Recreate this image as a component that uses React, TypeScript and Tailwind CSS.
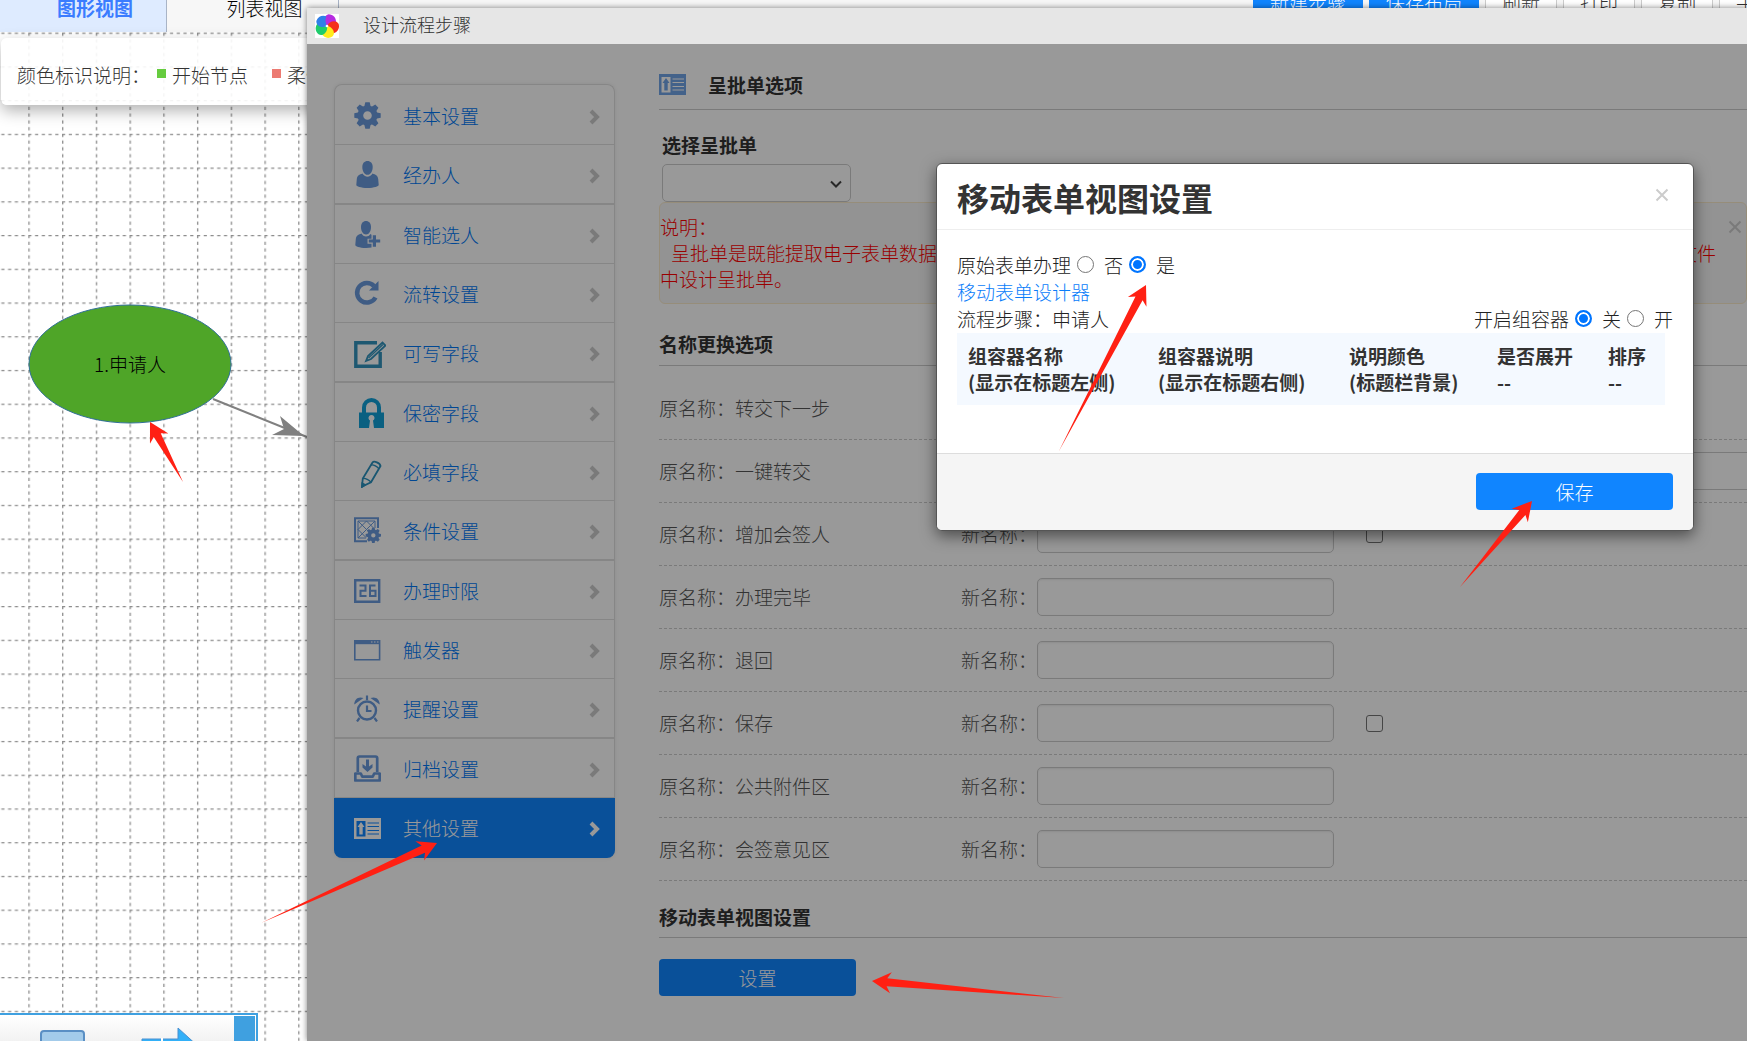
import type { ReactNode } from "react";

type IconProps = { className?: string };

const GEAR_TEETH = [0, 45, 90, 135, 180, 225, 270, 315];

function GearIcon({ className }: IconProps) {
    return (
        <svg viewBox="0 0 27 27" className={className} fill="currentColor">
            {GEAR_TEETH.map((a) => (
                <path key={a} d="M11.3 0.3h4.4l1.4 6h-7.2z" transform={`rotate(${a} 13.5 13.5)`} />
            ))}
            <path
                fillRule="evenodd"
                d="M13.5 3.5a10 10 0 1 0 0 20a10 10 0 0 0 0-20zm0 5.7a4.3 4.3 0 1 1 0 8.6a4.3 4.3 0 0 1 0-8.6z"
            />
        </svg>
    );
}

function UserIcon({ className }: IconProps) {
    return (
        <svg viewBox="0 0 27 27" className={className} fill="currentColor">
            <path d="M13.5 0c3 0 5.2 2.3 5.2 6c0 4.2-2.2 7.8-5.2 7.8S8.3 10.2 8.3 6C8.3 2.3 10.5 0 13.5 0z" />
            <path d="M8.5 12.5c-3 1-5.3 2-5.7 5.5L2.3 24c0 1.2 4.5 3 11.2 3s11.2-1.8 11.2-3l-.5-6c-.4-3.5-2.7-4.5-5.7-5.5c-1 2-3 3.2-5 3.2s-4-1.2-5-3.2z" />
        </svg>
    );
}

function UserPlusIcon({ className }: IconProps) {
    return (
        <svg viewBox="0 0 27 27" className={className} fill="currentColor">
            <path d="M12 0c3 0 5 2.3 5 6c0 4.2-2 7.5-5 7.5S7 10.2 7 6C7 2.3 9 0 12 0z" />
            <path d="M7.5 12.5c-3 1-5.3 2-5.7 5.5L1.3 24c0 1.2 4 3 10.7 3c2.2 0 4-.2 5.5-.5v-3.7h-4v-5h4v-4l-1-.8c-1 1.7-2.6 2.5-4.5 2.5s-3.5-1-4.5-3z" />
            <path d="M18.8 14.2h3.2v4.2h4.2v3.2H22v4.2h-3.2v-4.2h-4v-3.2h4z" />
        </svg>
    );
}

function RotateIcon({ className }: IconProps) {
    return (
        <svg viewBox="0 0 27 27" className={className}>
            <path d="M21.5 17.5a9.8 9.8 0 1 1-1.5-11.5" fill="none" stroke="currentColor" strokeWidth="4.5" />
            <path d="M24.5 1v9.5h-9.5z" fill="currentColor" />
        </svg>
    );
}

function WriteIcon({ className }: IconProps) {
    return (
        <svg viewBox="0 0 32 27" className={className} fill="none" stroke="currentColor">
            <path d="M23 1.8H1.8v23.4h24.4V11" strokeWidth="3.4" />
            <path d="M12 20l2-5L28.5 1.5l3 3L17 18z" strokeWidth="1.8" />
            <path d="M14.5 17L29 3.5" strokeWidth="1.2" />
        </svg>
    );
}

function LockIcon({ className }: IconProps) {
    return (
        <svg viewBox="0 0 27 30" className={className}>
            <path d="M6 15V9.5a7.5 7.5 0 0 1 15 0V15" fill="none" stroke="currentColor" strokeWidth="4" />
            <path
                fill="currentColor"
                fillRule="evenodd"
                d="M1 14.5h25V30H16l-1-7.5a3 3 0 1 0-3 0L11 30H1z"
            />
        </svg>
    );
}

function PencilIcon({ className }: IconProps) {
    return (
        <svg viewBox="0 0 27 28" className={className} fill="none" stroke="currentColor" strokeWidth="1.8">
            <path d="M4 26.5l.8-8L14.5 2.5c1.5-2 7.5.5 8 3.5L13 22.3z" />
            <path d="M4.8 18.5c2.5-.5 6.7 1.5 8.2 3.8M13 5c2.5-.5 6.5 1.5 8 4" strokeWidth="1.4" />
            <path d="M4 27l.3-3.5l2.7 1.4z" fill="currentColor" />
        </svg>
    );
}

function RuleIcon({ className }: IconProps) {
    return (
        <svg viewBox="0 0 27 27" className={className}>
            <g fill="none" stroke="currentColor">
                <path d="M24 11V1.3H1v23h12" strokeWidth="2" />
                <path d="M4 4h17v7M4 4v17h8M4 4l13 13M21 4L4 21M12.5 4L4 12.5l8 8M12.5 4l7 7" strokeWidth="1" />
            </g>
            <g transform="translate(11.5 10.5) scale(.58)" fill="currentColor">
                {GEAR_TEETH.map((a) => (
                    <path key={a} d="M11.3 0.3h4.4l1.4 6h-7.2z" transform={`rotate(${a} 13.5 13.5)`} />
                ))}
                <path
                    fillRule="evenodd"
                    d="M13.5 3.5a10 10 0 1 0 0 20a10 10 0 0 0 0-20zm0 6.2a3.8 3.8 0 1 1 0 7.6a3.8 3.8 0 0 1 0-7.6z"
                />
            </g>
        </svg>
    );
}

function CalendarIcon({ className }: IconProps) {
    return (
        <svg viewBox="0 0 27 27" className={className} fill="none" stroke="currentColor">
            <path d="M1.2 3.2h24v21.5h-24z" strokeWidth="2.4" />
            <path d="M5.5 8.5h6v5.2h-5v5.3h6M21.5 8.5h-5.5V19h5.5v-5.3h-5" strokeWidth="2" />
        </svg>
    );
}

function WindowIcon({ className }: IconProps) {
    return (
        <svg viewBox="0 0 27 27" className={className}>
            <path d="M.8 4.8h24.8v19H.8z" fill="none" stroke="currentColor" strokeWidth="1.6" />
            <path d="M.8 4.2h24.8v4H.8z" fill="currentColor" />
            <path d="M17 6h1.5M20 6h1.5M23 6h1.5" stroke="#fff" strokeWidth="1.2" />
        </svg>
    );
}

function AlarmIcon({ className }: IconProps) {
    return (
        <svg viewBox="0 0 27 27" className={className}>
            <circle cx="13" cy="15.5" r="9" fill="none" stroke="currentColor" strokeWidth="2.4" />
            <path d="M13 10.5v5.5h4.5M5.5 23l-2.5 3.5M20.5 23l2.5 3.5M13 .5v4.5" fill="none" stroke="currentColor" strokeWidth="2.2" />
            <path d="M.3 9.5C.3 4 4.5 1 9.5 3zM25.7 9.5C25.7 4 21.5 1 16.5 3z" fill="currentColor" />
        </svg>
    );
}

function ArchiveIcon({ className }: IconProps) {
    return (
        <svg viewBox="0 0 27 27" className={className}>
            <path
                d="M3.8 17V3.2c0-1 .7-1.7 1.7-1.7h16c1 0 1.7.7 1.7 1.7V17M1.3 18.5h5.5l1.5 3.2h10.4l1.5-3.2h5.5v7H1.3z"
                fill="none"
                stroke="currentColor"
                strokeWidth="2.7"
                strokeLinejoin="round"
            />
            <path d="M12 4.5h3v7l3.5-2.5v3.5L13.5 17l-5-4.5V9l3.5 2.5z" fill="currentColor" />
        </svg>
    );
}

function CardIcon({ className }: IconProps) {
    return (
        <svg viewBox="0 0 27 27" className={className}>
            <path
                fill="currentColor"
                fillRule="evenodd"
                d="M0 3h27v21H0zM2.5 6v15.5h9V6zM13.5 7.5v1h11.5v-1zM13.5 11v1h11.5v-1zM13.5 15v1h11.5v-1zM13.5 18.5v1h11.5v-1z"
            />
            <path d="M7 7l3.5 5h-1.8v7.5H5.3V12H3.5z" fill="currentColor" />
        </svg>
    );
}

function PinwheelIcon({ className }: IconProps) {
    const colors = ["#b62ce0", "#f5301c", "#ffec1c", "#1fcc6c", "#2f7fe8"];
    return (
        <svg viewBox="0 0 24 24" className={className}>
            <path d="M0 0h24v24H0z" fill="#fff" />
            {colors.map((c, i) => (
                <path key={c} d="M12 12C8 8.5 8.5 1.5 13.5.3c5 0 8 4 7.5 8.2C18 8 15 9 12 12z" fill={c} transform={`rotate(${i * 72} 12 12)`} />
            ))}
            <circle cx="12" cy="12" r="1.3" fill="#fff" />
        </svg>
    );
}

function ChevronIcon({ className }: IconProps) {
    return (
        <svg viewBox="0 0 12 16" className={className}>
            <path d="M2 2l6 6l-6 6" fill="none" stroke="currentColor" strokeWidth="4" />
        </svg>
    );
}

function CloseIcon({ className }: IconProps) {
    return (
        <svg viewBox="0 0 14 14" className={className}>
            <path d="M1.5 1.5l11 11M12.5 1.5l-11 11" stroke="currentColor" strokeWidth="2" />
        </svg>
    );
}

const menu = [
    { label: "基本设置", icon: GearIcon, size: "w-[27px] h-[27px]" },
    { label: "经办人", icon: UserIcon, size: "w-[27px] h-[27px]", thick: true },
    { label: "智能选人", icon: UserPlusIcon, size: "w-[27px] h-[27px]" },
    { label: "流转设置", icon: RotateIcon, size: "w-[27px] h-[27px]" },
    { label: "可写字段", icon: WriteIcon, size: "w-8 h-[27px] mt-1", color: "text-[#3393bd]", thick: true },
    { label: "保密字段", icon: LockIcon, size: "w-[27px] h-[30px] ml-1", color: "text-[#12a0d8]" },
    { label: "必填字段", icon: PencilIcon, size: "w-[27px] h-7 ml-1 mt-1", color: "text-[#2a90bd]" },
    { label: "条件设置", icon: RuleIcon, size: "w-[27px] h-[27px]", thick: true },
    { label: "办理时限", icon: CalendarIcon, size: "w-[27px] h-[27px]" },
    { label: "触发器", icon: WindowIcon, size: "w-[27px] h-[27px]" },
    { label: "提醒设置", icon: AlarmIcon, size: "w-[27px] h-[27px]", thick: true },
    { label: "归档设置", icon: ArchiveIcon, size: "w-[27px] h-[27px]" },
    { label: "其他设置", icon: CardIcon, size: "w-[27px] h-[27px]", active: true },
];

const renames = [
    { name: "转交下一步", check: true },
    { name: "一键转交", check: true, extra: true },
    { name: "增加会签人", check: true },
    { name: "办理完毕" },
    { name: "退回" },
    { name: "保存", check: true },
    { name: "公共附件区" },
    { name: "会签意见区" },
];

const columns = [
    { title: "组容器名称", note: "(显示在标题左侧)", width: "w-[190px]" },
    { title: "组容器说明", note: "(显示在标题右侧)", width: "w-[191px]" },
    { title: "说明颜色", note: "(标题栏背景)", width: "w-[148px]" },
    { title: "是否展开", note: "--", width: "w-[111px]" },
    { title: "排序", note: "--", width: "w-[68px]" },
];

// tail x/y, tip x/y
const arrows = [
    [183, 482, 150, 422],
    [261, 923, 437, 843],
    [1059, 451, 1146, 285],
    [1460, 587, 1532, 501],
    [1064, 998, 872, 981],
];

function Arrow({ points: [x1, y1, x2, y2] }: { points: number[] }) {
    const len = Math.hypot(x2 - x1, y2 - y1);
    const angle = (Math.atan2(y2 - y1, x2 - x1) * 180) / Math.PI;
    return (
        <polygon
            points={`0,0 ${len - 15},-4 ${len - 19},-10.5 ${len},0 ${len - 19},10.5 ${len - 15},4`}
            transform={`translate(${x1} ${y1}) rotate(${angle})`}
            fill="#ff2013"
        />
    );
}

function TopBar() {
    return (
        <div className="flex h-8 items-end justify-between overflow-hidden bg-[#f7f7f7]">
            <div className="flex h-12 shrink-0">
                <button className="w-[167px] border-r border-[#a9b4c6] bg-[#deebff] pl-6 font-bold text-[#3b7cff]">图形视图</button>
                <button className="w-[172px] border-r border-[#a9b4c6] pl-6 text-black">列表视图</button>
            </div>
            <div className="mb-3 flex shrink-0 gap-[6px]">
                <button className="h-9 w-[110px] bg-[#1085ff] text-white">新建步骤</button>
                <button className="h-9 w-[110px] bg-[#1085ff] text-white">保存布局</button>
                {["刷新", "打印", "复制"].map((label) => (
                    <button key={label} className="h-9 w-[72px] border border-[#ccc] bg-white text-[#333]">
                        {label}
                    </button>
                ))}
                <button className="h-9 w-7 overflow-hidden border border-r-0 border-[#ccc] bg-white pl-4 text-left whitespace-nowrap text-[#333]">
                    手动
                </button>
            </div>
        </div>
    );
}

function FlowCanvas() {
    return (
        <div className="relative flex-1 bg-white">
            <svg className="absolute inset-0 h-full w-full">
                <defs>
                    <pattern id="grid" width="33.73" height="33.73" patternUnits="userSpaceOnUse" x="28.3" y="101.8">
                        <path d="M.7 0V33.73M0 .7H33.73" stroke="#8c8c8c" strokeWidth="1.3" strokeDasharray="3.2 3.546" />
                    </pattern>
                </defs>
                <rect width="100%" height="100%" fill="url(#grid)" />
                <path d="M213 367l94 38" stroke="#808080" strokeWidth="2" />
                <path d="M304 404l-32-1l12-6l-4-13z" fill="#808080" />
                <ellipse cx="130" cy="332" rx="101" ry="59" fill="#4fa528" stroke="#2f6f96" />
            </svg>
            <div className="absolute top-[273px] left-[29px] flex h-[118px] w-[202px] items-center justify-center text-black">
                1.申请人
            </div>
            <div className="absolute top-[6px] left-px flex h-[67px] w-[420px] items-center rounded-md bg-white/90 pt-[6px] pl-4 whitespace-nowrap text-[#333] shadow-[0_6px_16px_rgba(0,0,0,0.3)]">
                <span className="mr-[7px]">颜色标识说明：</span>
                <span className="mr-[6px] mb-[2px] h-[9px] w-[9px] bg-[#66cc3f]" />
                <span className="mr-6">开始节点</span>
                <span className="mr-[6px] mb-[2px] h-[9px] w-[9px] bg-[#ec7a72]" />
                <span>柔性节点</span>
            </div>
            <div className="absolute bottom-0 left-0 flex h-7 w-[258px] overflow-hidden border-t-2 border-r-2 border-[#3fa0e0] bg-gradient-to-b from-white to-[#f2f2f2]">
                <svg className="h-[26px] flex-1" viewBox="0 0 234 26">
                    <rect x="41" y="16" width="43" height="30" rx="3" fill="#a3cbea" stroke="#5a8fc4" strokeWidth="2" />
                    <path d="M142 24H178V13l22 20h-58z" fill="#32b0f8" stroke="#4a90d0" />
                    <path d="M162 23v6" stroke="#fff" strokeWidth="2" />
                </svg>
                <div className="mt-px mr-px w-[21px] bg-[#3fa0e0]" />
            </div>
        </div>
    );
}

function SideMenu() {
    return (
        <nav className="mt-10 h-fit w-[281px] shrink-0 rounded-lg border border-b-0 border-[#e0e0e0] pt-px shadow-[0_0_4px_rgba(0,0,0,0.08)]">
            {menu.map(({ label, icon: Icon, size, color, thick, active }) => (
                <a
                    key={label}
                    href="#"
                    className={
                        active
                            ? "-mx-px flex h-[60px] items-center rounded-b-lg bg-[#1085ff] px-5 text-white"
                            : `box-content flex h-[57px] items-center px-[19px] pt-px text-[#0077f5] ${thick ? "border-b-2" : "border-b"} border-[#e0e0e0]`
                    }
                >
                    <span className={`flex w-[49px] items-center ${active ? "text-white" : color || "text-[#6999dc]"}`}>
                        <Icon className={`${size} shrink-0`} />
                    </span>
                    <span className="flex-1">{label}</span>
                    <ChevronIcon className={`mt-[2px] mr-[-6px] h-4 w-3 ${active ? "text-white" : "text-[#ccc]"}`} />
                </a>
            ))}
        </nav>
    );
}

function SectionTitle({ className, children }: { className: string; children: ReactNode }) {
    return <h3 className={`flex items-center border-b border-[#ccc] font-bold text-[#333] ${className}`}>{children}</h3>;
}

function Content() {
    return (
        <main className="ml-11 min-w-0 flex-1">
            <SectionTitle className="h-[66px] pt-4">
                <CardIcon className="mr-[22px] h-[27px] w-[27px] text-[#70a4e6]" />
                呈批单选项
            </SectionTitle>
            <label htmlFor="sheet" className="mt-[21px] mb-[5px] ml-[3px] block leading-7 font-bold text-[#333]">
                选择呈批单
            </label>
            <div className="relative ml-[3px] w-[189px]">
                <select id="sheet" className="block h-[38px] w-full appearance-none rounded-[5px] border border-[#ccc] bg-white" />
                <svg viewBox="0 0 14 9" className="pointer-events-none absolute top-4 right-2 h-[9px] w-[14px]">
                    <path d="M2 1.5l5 5l5-5" fill="none" stroke="#444" strokeWidth="2" />
                </svg>
            </div>
            <div className="relative rounded-md border border-[#faebcc] bg-[#f5f5f5] py-[11px] leading-[26px] whitespace-nowrap text-[#f00]">
                <p>说明：</p>
                <p className="pl-[11px]">
                    呈批单是既能提取电子表单数据又能提取办理意见的打印模板，流程办理过程中可以随时打印归档，请在系统中的呈批单文件
                </p>
                <p>中设计呈批单。</p>
                <button aria-label="关闭说明" className="absolute top-[17px] right-1 text-[#ccc]">
                    <CloseIcon className="h-[14px] w-[14px]" />
                </button>
            </div>
            <SectionTitle className="h-[62px] pt-[18px]">名称更换选项</SectionTitle>
            <div className="pt-[11px] text-[#555]">
                {renames.map(({ name, check, extra }, i) => (
                    <div key={name} className="flex h-[63px] items-center border-b border-dashed border-[#ccc]">
                        <span className="w-[302px] shrink-0">原名称：{name}</span>
                        <label htmlFor={`rename-${i}`} className="shrink-0">
                            新名称：
                        </label>
                        <input
                            id={`rename-${i}`}
                            type="text"
                            className="h-[38px] w-[297px] shrink-0 rounded-[5px] border border-[#ccc] bg-white shadow-[inset_0_1px_2px_rgba(0,0,0,0.08)]"
                        />
                        {check && (
                            <input
                                type="checkbox"
                                aria-label={name}
                                className="ml-8 h-[17px] w-[17px] shrink-0 appearance-none rounded-[3px] border border-[#767676] bg-white"
                            />
                        )}
                        {extra && (
                            <input
                                type="text"
                                aria-label="备注"
                                className="ml-4 h-[38px] min-w-0 flex-1 border-y border-[#ccc] bg-white"
                            />
                        )}
                    </div>
                ))}
            </div>
            <SectionTitle className="h-[57px] pt-4">移动表单视图设置</SectionTitle>
            <button className="mt-[21px] h-[37px] w-[197px] rounded-sm bg-[#1085ff] text-white">设置</button>
        </main>
    );
}

function Radio({ name, label, checked }: { name: string; label: string; checked?: boolean }) {
    return (
        <label className="flex items-center gap-[10px]">
            <input
                type="radio"
                name={name}
                defaultChecked={checked}
                className="h-[17px] w-[17px] appearance-none rounded-full border border-[#767676] bg-white checked:border-2 checked:border-[#0075ff] checked:bg-[#0075ff] checked:shadow-[inset_0_0_0_2px_#fff]"
            />
            {label}
        </label>
    );
}

function ViewModal() {
    return (
        <section
            role="dialog"
            className="absolute top-[155px] right-[53px] w-[758px] overflow-hidden rounded-md border border-[#555] bg-white text-[#333] shadow-[0_5px_15px_rgba(0,0,0,0.5)]"
        >
            <header className="flex h-[66px] items-center justify-between border-b border-[#eee] px-5 pt-px">
                <h2 className="text-[32px] leading-10 font-bold">移动表单视图设置</h2>
                <button aria-label="关闭" className="mr-1 mb-1 text-[#ccc]">
                    <CloseIcon className="h-[14px] w-[14px]" />
                </button>
            </header>
            <div className="px-5 pt-[21px] pb-12 leading-[27px] text-[#222]">
                <div className="flex items-center gap-[6px]">
                    <span>原始表单办理</span>
                    <Radio name="origin" label="否" />
                    <Radio name="origin" label="是" checked />
                </div>
                <a href="#" className="block w-fit text-[#0a7dfa]">
                    移动表单设计器
                </a>
                <div className="flex items-center justify-between">
                    <span>流程步骤：申请人</span>
                    <div className="flex items-center gap-[6px]">
                        <span>开启组容器</span>
                        <Radio name="group" label="关" checked />
                        <Radio name="group" label="开" />
                    </div>
                </div>
                <table className="mt-px w-[708px] table-fixed bg-[#f4f9ff] text-left leading-[26px] text-[#333]">
                    <thead>
                        <tr>
                            {columns.map(({ title, note, width }) => (
                                <th key={title} className={`${width} py-[10px] pl-[11px] font-bold whitespace-nowrap`}>
                                    {title}
                                    <br />
                                    {note}
                                </th>
                            ))}
                        </tr>
                    </thead>
                </table>
            </div>
            <footer className="flex justify-end border-t border-[#ddd] bg-[#f5f5f5] px-5 pt-[19px] pb-5">
                <button className="h-[37px] w-[197px] rounded-sm bg-[#1085ff] text-white">保存</button>
            </footer>
        </section>
    );
}

export default function App() {
    return (
        <div className="relative flex h-screen flex-col overflow-hidden font-['Noto_Sans_CJK_SC',sans-serif] text-[19px] leading-7 font-light">
            <TopBar />
            <FlowCanvas />
            <div className="absolute top-2 right-0 bottom-0 left-[307px] flex flex-col bg-white shadow-[0_0_6px_rgba(0,0,0,0.5)]">
                <div className="flex h-9 shrink-0 items-center bg-[#e6e6e6] pl-2 text-[18px] text-[#333]">
                    <PinwheelIcon className="mr-6 h-6 w-6" />
                    <span className="pb-1">设计流程步骤</span>
                </div>
                <div className="relative flex min-h-0 flex-1 overflow-hidden pl-[27px]">
                    <SideMenu />
                    <Content />
                    <div className="absolute inset-0 bg-black/40" />
                </div>
                <ViewModal />
            </div>
            <svg className="pointer-events-none absolute inset-0 h-full w-full">
                {arrows.map((points) => (
                    <Arrow key={points.join()} points={points} />
                ))}
            </svg>
        </div>
    );
}
